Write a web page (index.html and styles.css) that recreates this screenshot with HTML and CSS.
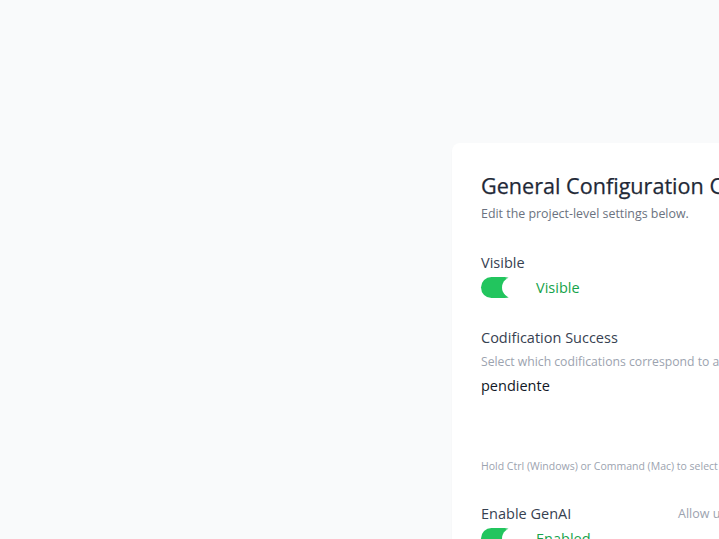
FILE: index.html
```html
<!DOCTYPE html>
<html lang="en">
<head>
<meta charset="utf-8">
<title>General Configuration</title>
<link rel="stylesheet" href="styles.css">
</head>
<body>
<main class="page">
  <section class="card">
    <h1 class="title">General Configuration Center</h1>
    <p class="subtitle">Edit the project-level settings below.</p>

    <div class="field">
      <div class="label">Visible</div>
      <div class="toggle-row">
        <span class="toggle"><span class="knob"></span></span>
        <span class="toggle-text">Visible</span>
      </div>
    </div>

    <div class="field">
      <div class="label">Codification Success</div>
      <div class="help">Select which codifications correspond to a successful interview.</div>
      <div class="select-list">
        <div class="option">pendiente</div>
      </div>
      <div class="hint">Hold Ctrl (Windows) or Command (Mac) to select multiple options.</div>
    </div>

    <div class="field split">
      <div class="split-left">
        <div class="label">Enable GenAI</div>
        <div class="toggle-row">
          <span class="toggle"><span class="knob"></span></span>
          <span class="toggle-text">Enabled</span>
        </div>
      </div>
      <div class="split-right">Allow users to use generative AI features.</div>
    </div>
  </section>
</main>
</body>
</html>
```
FILE: styles.css
```css
html, body {
  margin: 0;
  padding: 0;
  background: #f9fafb;
  overflow: hidden;
  font-family: "Open Sans", "Noto Sans", sans-serif;
}
.page {
  padding: 143px 0 0 452px;
  width: 900px;
}
.card {
  background: #ffffff;
  border-radius: 8px;
  box-shadow: 0 1px 2px rgba(0,0,0,0.03);
  padding: 28px 29px;
  min-height: 500px;
}
.title {
  margin: 0;
  font-size: 21.6px;
  font-weight: 500;
  color: #1f2937;
  line-height: 30px;
  -webkit-text-stroke: 0.25px #1f2937;
}
.subtitle {
  margin: 4px 0 0;
  font-size: 12.4px;
  color: #6b7280;
  line-height: 18px;
}
.field {
  margin-top: 30px;
}
.label {
  font-size: 14.5px;
  color: #374151;
  line-height: 20px;
}
.toggle-row {
  display: flex;
  align-items: center;
  gap: 21px;
  margin-top: 4px;
}
.toggle {
  position: relative;
  width: 34px;
  height: 21px;
  border-radius: 11px;
  background: #22c55e;
}
.knob {
  position: absolute;
  left: 21px;
  top: 0;
  width: 22px;
  height: 21px;
  border-radius: 50%;
  background: #ffffff;
}
.toggle-text {
  font-size: 14.5px;
  color: #16a34a;
}
.help {
  font-size: 12.2px;
  color: #9ca3af;
  margin-top: 5px;
  line-height: 18px;
  white-space: nowrap;
}
.select-list {
  height: 83px;
  margin-top: 4px;
}
.option {
  font-size: 14.5px;
  color: #111827;
  line-height: 22px;
}
.hint {
  font-size: 10.5px;
  color: #9ca3af;
  line-height: 16px;
  white-space: nowrap;
}
.split {
  display: flex;
  margin-top: 30px;
}
.split-left {
  width: 197px;
  flex: none;
}
.split-right {
  font-size: 12.5px;
  color: #9ca3af;
  white-space: nowrap;
  line-height: 20px;
}
```
